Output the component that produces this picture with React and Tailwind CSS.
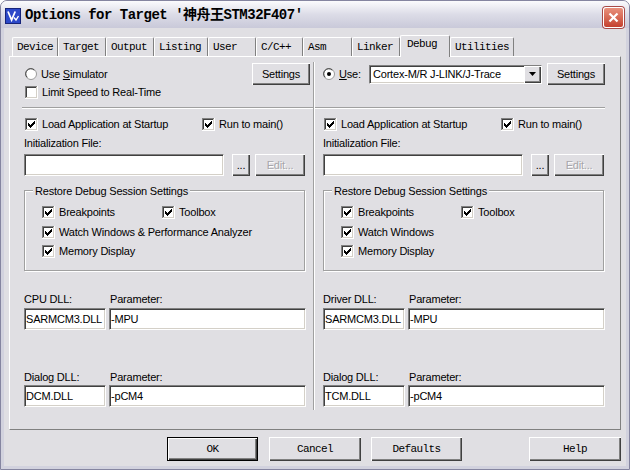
import React from "react";

const mono = "font-['Liberation_Mono','Noto_Sans_CJK_SC',monospace]";
const raised =
  "bg-[#e0dfe3] shadow-[inset_1px_1px_0_#fff,inset_-1px_-1px_0_#404040,inset_-2px_-2px_0_#808080]";
const sunken =
  "bg-white border border-t-[#808080] border-l-[#808080] border-r-white border-b-white shadow-[inset_1px_1px_0_#404040,inset_-1px_-1px_0_#d4d0c8]";

// classic 7x7 tick, one rect per run of pixels
const tick = [
  [9, 3, 1], [8, 4, 2], [3, 5, 1], [7, 5, 3], [3, 6, 2], [6, 6, 3],
  [3, 7, 5], [4, 8, 3], [5, 9, 1],
];

function CheckBox({ on }) {
  return (
    <svg width="13" height="13" viewBox="0 0 13 13" className="shrink-0" shapeRendering="crispEdges">
      <rect width="13" height="13" fill="#fff" />
      <path d="M0 0h12v1H0zM0 0h1v12H0z" fill="#808080" />
      <path d="M1 1h10v1H1zM1 1h1v10H1z" fill="#404040" />
      <path d="M1 11h11v1H1zM11 1h1v11h-1z" fill="#d4d0c8" />
      {on &&
        tick.map(([x, y, w]) => (
          <rect key={`${x}-${y}`} x={x} y={y} width={w} height="1" fill="#000" />
        ))}
    </svg>
  );
}

function Radio({ on }) {
  return (
    <svg width="12" height="12" viewBox="0 0 12 12" className="shrink-0">
      <circle cx="6" cy="6" r="5.5" fill="#fff" stroke="#9a9a9a" />
      <path d="M2.2 9.3A4.6 4.6 0 0 1 9.3 2.2" stroke="#404040" fill="none" />
      {on && <circle cx="6" cy="6" r="2" fill="#000" />}
    </svg>
  );
}

function Check({ children, className = "", on = true }) {
  return (
    <div className={`flex items-center ${className}`}>
      <CheckBox on={on} />
      <span className="ml-[4px] whitespace-nowrap">{children}</span>
    </div>
  );
}

function Button({ children, className = "", disabled }) {
  return (
    <div
      className={`flex items-center justify-center ${raised} ${
        disabled ? "text-[#a7a6aa] [text-shadow:1px_1px_0_#fff]" : ""
      } ${className}`}
    >
      {children}
    </div>
  );
}

function Field({ children, className = "" }) {
  return (
    <div className={`flex items-center px-[1px] h-[22px] whitespace-nowrap ${sunken} ${className}`}>
      {children}
    </div>
  );
}

function Separator({ className }) {
  return <div className={`h-[2px] border-t border-[#a0a0a0] border-b border-b-white ${className}`} />;
}

function DebugSide({ right }) {
  const restore = right
    ? "Watch Windows"
    : "Watch Windows & Performance Analyzer";
  return (
    <div className={`flex flex-col ${right ? "flex-1 pl-[8px]" : "w-[303px] pl-[14px]"}`}>
      {right ? (
        <div className="mt-[6px] h-[22px] flex items-center">
          <div className="w-[46px] flex items-center">
            <Radio on />
            <span className="ml-[4px]">
              <u>U</u>se:
            </span>
          </div>
          <div className={`w-[173px] h-[19px] flex items-center ${sunken}`}>
            <span className="flex-1 pl-[3px] whitespace-nowrap">Cortex-M/R J-LINK/J-Trace</span>
            <div className={`w-[17px] h-full flex items-center justify-center ${raised}`}>
              <svg width="7" height="4" viewBox="0 0 7 4">
                <path d="M0 0h7L3.5 4z" fill="#000" />
              </svg>
            </div>
          </div>
          <Button className="ml-[5px] w-[58px] h-[22px]">Settings</Button>
        </div>
      ) : (
        <div className="mt-[6px] h-[22px] w-[286px] flex items-center justify-between">
          <div className="flex items-center ml-[1px]">
            <Radio />
            <span className="ml-[4px]">
              Use <u>S</u>imulator
            </span>
          </div>
          <Button className="w-[58px] h-[22px]">Settings</Button>
        </div>
      )}

      <div className="h-[14px] flex items-center">
        {!right && (
          <Check on={false} className="ml-[1px]">
            Limit Speed to Real-Time
          </Check>
        )}
      </div>

      <Separator className={right ? "mt-[8px] -ml-[8px] w-[290px]" : "mt-[8px] -ml-[2px] w-[291px]"} />

      <div className="mt-[8px] h-[14px] flex items-center">
        <Check className="ml-[1px] w-[177px]">Load Application at Startup</Check>
        <Check>Run to main()</Check>
      </div>

      <div className="mt-[5px] h-[14px] flex items-center">Initialization File:</div>

      <div className="mt-[4px] h-[22px] flex">
        <Field className="w-[200px]" />
        <Button className="ml-[8px] w-[18px] h-[22px]">...</Button>
        <Button disabled className="ml-[5px] w-[50px] h-[22px]">Edit...</Button>
      </div>

      <div className="relative mt-[14px] w-[281px] h-[81px] border border-[#a0a0a0] shadow-[1px_1px_0_#fff,inset_1px_1px_0_#fff] pl-[17px] pt-[14px]">
        <span className="absolute left-[8px] -top-[7px] px-[2px] leading-[14px] bg-[#e0dfe3] whitespace-nowrap">
          Restore Debug Session Settings
        </span>
        <div className="h-[14px] flex items-center">
          <Check className="w-[120px]">Breakpoints</Check>
          <Check>Toolbox</Check>
        </div>
        <Check className="mt-[6px] h-[14px]">{restore}</Check>
        <Check className="mt-[5px] h-[14px]">Memory Display</Check>
      </div>

      <div className="mt-[21px] h-[14px] flex items-center">
        <span className="w-[86px]">{right ? "Driver DLL:" : "CPU DLL:"}</span>
        <span>Parameter:</span>
      </div>
      <div className="mt-[2px] flex">
        <Field className="w-[82px]">SARMCM3.DLL</Field>
        <Field className="ml-[3px] w-[197px]">-MPU</Field>
      </div>

      <div className="mt-[40px] h-[14px] flex items-center">
        <span className="w-[86px]">Dialog DLL:</span>
        <span>Parameter:</span>
      </div>
      <div className="mt-[1px] flex">
        <Field className="w-[82px]">{right ? "TCM.DLL" : "DCM.DLL"}</Field>
        <Field className="ml-[3px] w-[197px]">-pCM4</Field>
      </div>
    </div>
  );
}

const tabs = [
  ["Device", 46], ["Target", 48], ["Output", 48], ["Listing", 54], ["User", 48],
  ["C/C++", 47], ["Asm", 49], ["Linker", 48], ["Debug", 50], ["Utilities", 64],
];

const tabWidth = {
  46: "w-[46px]", 47: "w-[47px]", 48: "w-[48px]", 49: "w-[49px]",
  50: "w-[50px]", 54: "w-[54px]", 64: "w-[64px]",
};

export default function App() {
  return (
    <div className="w-[630px] h-[470px] flex flex-col bg-[#e0dfe3] border border-[#8585a0] rounded-t-[7px] overflow-hidden text-black font-['Liberation_Sans',Arial,sans-serif] text-[11px] tracking-[-0.2px]">
      {/* title bar */}
      <div className="h-[27px] pt-[2px] pl-[4px] pr-[5px] flex items-center bg-gradient-to-b from-[#fbfbfd] via-[#dcdce7] to-[#c9c9d9]">
        <svg width="16" height="16" viewBox="0 0 16 16" className="shrink-0">
          <rect x="0.5" y="0.5" width="15" height="15" fill="#2c48c9" stroke="#16237a" />
          <path d="M3 3.5l3.6 8.5L10.2 3.5" stroke="#fff" strokeWidth="1.8" fill="none" />
          <path d="M9 9.5l2 2.5 2.5-4" stroke="#fff" strokeWidth="1.4" fill="none" />
        </svg>
        <span className={`ml-[4px] ${mono} font-bold text-[14px] tracking-[-0.5px] whitespace-nowrap`}>
          Options for Target '神舟王STM32F407'
        </span>
        <div className="ml-auto mt-[3px] w-[21px] h-[21px] rounded-[3px] border border-white bg-gradient-to-b from-[#e8907c] to-[#c4402e] shadow-[0_0_0_1px_#a84a48] flex items-center justify-center">
          <svg width="11" height="11" viewBox="0 0 11 11">
            <path d="M1.5 1.5l8 8M9.5 1.5l-8 8" stroke="#fff" strokeWidth="2.2" />
          </svg>
        </div>
      </div>

      {/* dialog body */}
      <div className="flex-1 flex flex-col border-x-[3px] border-b-[3px] border-[#d2d2de] pt-[7px]">
        <div className={`h-[21px] ml-[8px] flex items-end ${mono} text-[11px] tracking-[-0.6px]`}>
          {tabs.map(([name, w]) =>
            name === "Debug" ? (
              <div
                key={name}
                className={`${tabWidth[w]} h-[22px] translate-y-[1px] relative z-10 bg-[#e0dfe3] border-t border-l border-r border-t-white border-l-white border-r-[#808080] rounded-t-[2px] pl-[6px] pb-[4px] flex items-center`}
              >
                {name}
              </div>
            ) : (
              <div
                key={name}
                className={`${tabWidth[w]} h-[19px] border-t border-l border-r border-t-white border-l-white border-r-[#808080] rounded-t-[2px] pl-[4px] flex items-center`}
              >
                {name}
              </div>
            )
          )}
        </div>

        <div className="ml-[5px] w-[612px] h-[374px] flex border border-t-white border-l-white border-r-[#808080] border-b-[#808080]">
          <DebugSide />
          <div className="w-[2px] mt-[5px] mb-[19px] border-l border-[#a0a0a0] border-r border-r-white" />
          <DebugSide right />
        </div>

        <div className={`mt-[7px] flex ${mono} text-[11px] tracking-[-0.6px]`}>
          <div className="ml-[163px] w-[91px] h-[24px] border border-black">
            <Button className="w-full h-full">OK</Button>
          </div>
          <Button className="ml-[11px] w-[92px] h-[24px]">Cancel</Button>
          <Button className="ml-[10px] w-[91px] h-[24px]">Defaults</Button>
          <Button className="ml-[67px] w-[92px] h-[24px]">Help</Button>
        </div>
      </div>
    </div>
  );
}
